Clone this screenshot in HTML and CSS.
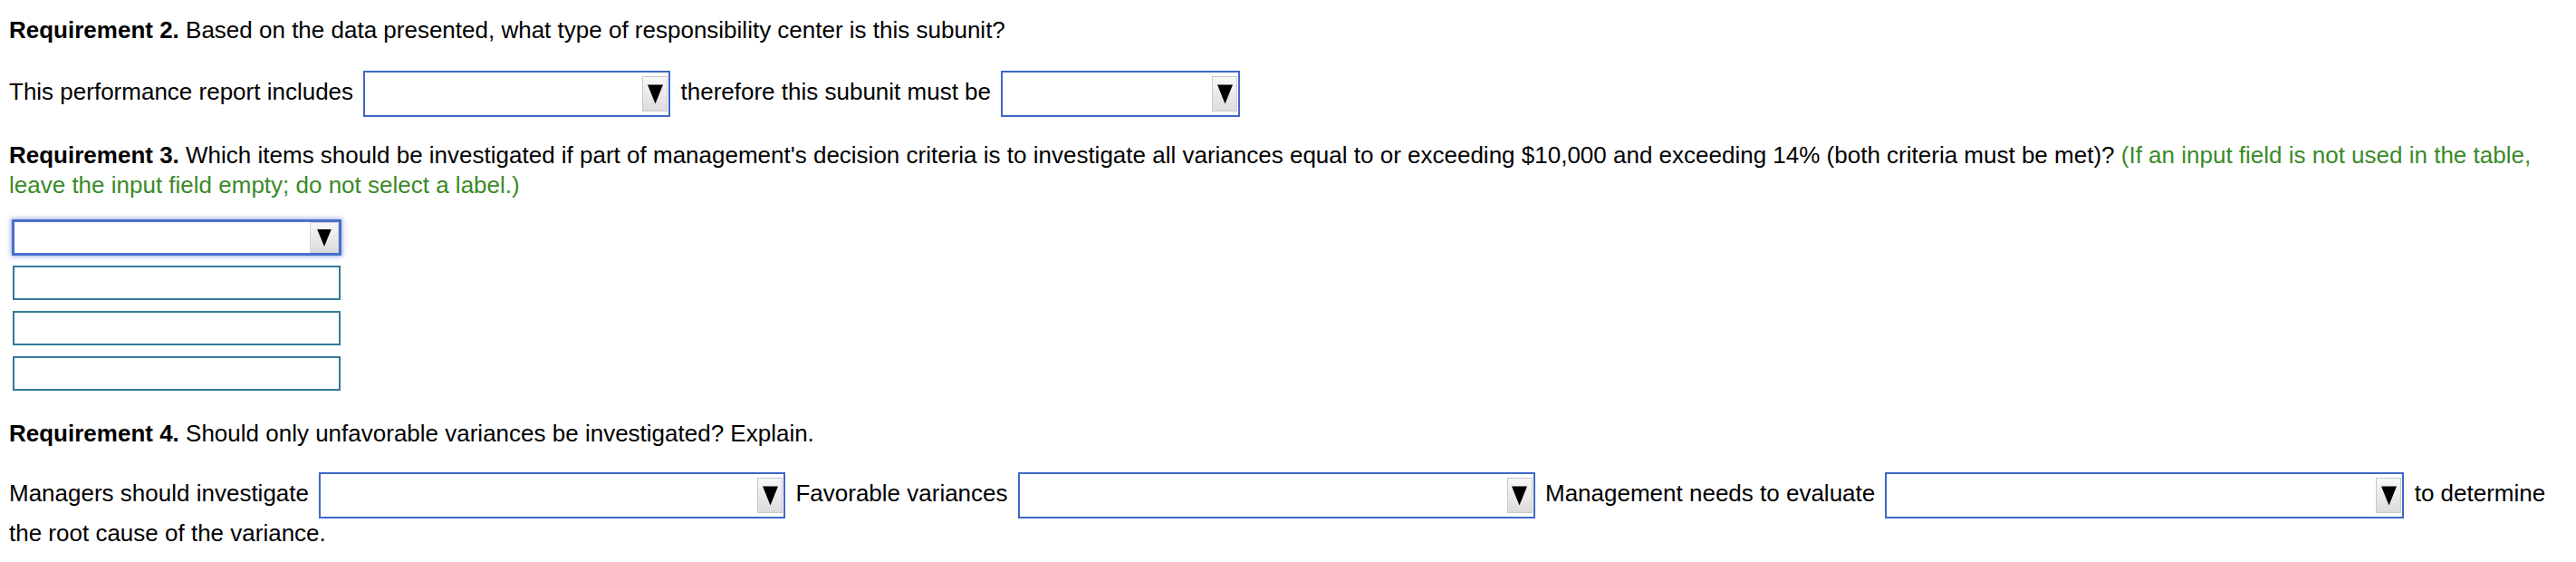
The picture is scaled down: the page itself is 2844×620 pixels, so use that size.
FILE: index.html
```html
<!DOCTYPE html>
<html>
<head>
<meta charset="utf-8">
<link rel="stylesheet" href="styles.css">
</head>
<body>
<p class="req req2"><b>Requirement 2.</b> Based on the data presented, what type of responsibility center is this subunit?</p>
<p class="line line2">This performance report includes <span class="sel w339"><span class="btn"><svg class="tri" viewBox="0 0 18 22"><polygon points="0,0 18,0 9,22" fill="#000"/></svg></span></span> therefore this subunit must be <span class="sel w264"><span class="btn"><svg class="tri" viewBox="0 0 18 22"><polygon points="0,0 18,0 9,22" fill="#000"/></svg></span></span></p>
<p class="req req3"><b>Requirement 3.</b> Which items should be investigated if part of management's decision criteria is to investigate all variances equal to or exceeding $10,000 and exceeding 14% (both criteria must be met)? <span class="note">(If an input field is not used in the table, leave the input field empty; do not select a label.)</span></p>
<div class="items">
  <div class="row"><span class="sel focus"><span class="btn"><svg class="tri" viewBox="0 0 18 22"><polygon points="0,0 18,0 9,22" fill="#000"/></svg></span></span></div>
  <div class="row"><span class="inp"></span></div>
  <div class="row"><span class="inp"></span></div>
  <div class="row"><span class="inp"></span></div>
</div>
<p class="req req4"><b>Requirement 4.</b> Should only unfavorable variances be investigated? Explain.</p>
<p class="line line4">Managers should investigate <span class="sel w515"><span class="btn"><svg class="tri" viewBox="0 0 18 22"><polygon points="0,0 18,0 9,22" fill="#000"/></svg></span></span> Favorable variances <span class="sel w571"><span class="btn"><svg class="tri" viewBox="0 0 18 22"><polygon points="0,0 18,0 9,22" fill="#000"/></svg></span></span> Management needs to evaluate <span class="sel w573"><span class="btn"><svg class="tri" viewBox="0 0 18 22"><polygon points="0,0 18,0 9,22" fill="#000"/></svg></span></span> to determine the root cause of the variance.</p>
</body>
</html>
```
FILE: styles.css
```css
html, body {
  background: #ffffff;
}
body {
  margin: 0;
  padding: 0 8px 0 10px;
  font-family: "Liberation Sans", Arial, sans-serif;
  font-size: 26px;
  line-height: 33px;
  color: #000000;
}
p {
  margin: 0;
}
.req2 {
  padding-top: 17px;
}
.line2 {
  margin-top: 28px;
}
.req3 {
  margin-top: 26px;
}
.note {
  color: #3a8a28;
}
.items {
  margin-top: 16px;
  display: flex;
  flex-direction: column;
  padding-left: 3px;
}
.row {
  height: 50px;
  display: flex;
  align-items: center;
}
.req4 {
  margin-top: 25px;
}
.line4 {
  margin-top: 26px;
}
.sel {
  display: inline-block;
  box-sizing: border-box;
  height: 51px;
  border: 2px solid #3e68c6;
  background: #ffffff;
  vertical-align: middle;
  margin: 0 4px;
  position: relative;
}
.w339 { width: 339px; }
.w264 { width: 264px; }
.w515 { width: 515px; }
.w571 { width: 571px; }
.w573 { width: 573px; }
.sel .btn {
  position: absolute;
  right: 1px;
  top: 4px;
  width: 28px;
  height: 39px;
  box-sizing: border-box;
  border: 1px solid #c9c9c9;
  background: linear-gradient(#f8f8f8, #dcdcdc);
  display: flex;
  align-items: center;
  justify-content: center;
}
.tri {
  width: 17px;
  height: 22px;
  display: block;
}
.sel.focus {
  width: 364px;
  height: 40px;
  margin: 0;
  border: 3px solid #4a6fca;
  box-shadow: 0 0 5px 1px rgba(74, 111, 202, 0.55);
}
.sel.focus .btn {
  right: 0;
  top: 0;
  width: 32px;
  height: 34px;
  border: 1px solid #d4d4d4;
}
.sel.focus .tri {
  width: 16px;
  height: 19px;
}
.inp {
  display: block;
  box-sizing: border-box;
  width: 362px;
  height: 38px;
  margin-left: 1px;
  border: 2px solid #337a99;
  background: #ffffff;
}
```
